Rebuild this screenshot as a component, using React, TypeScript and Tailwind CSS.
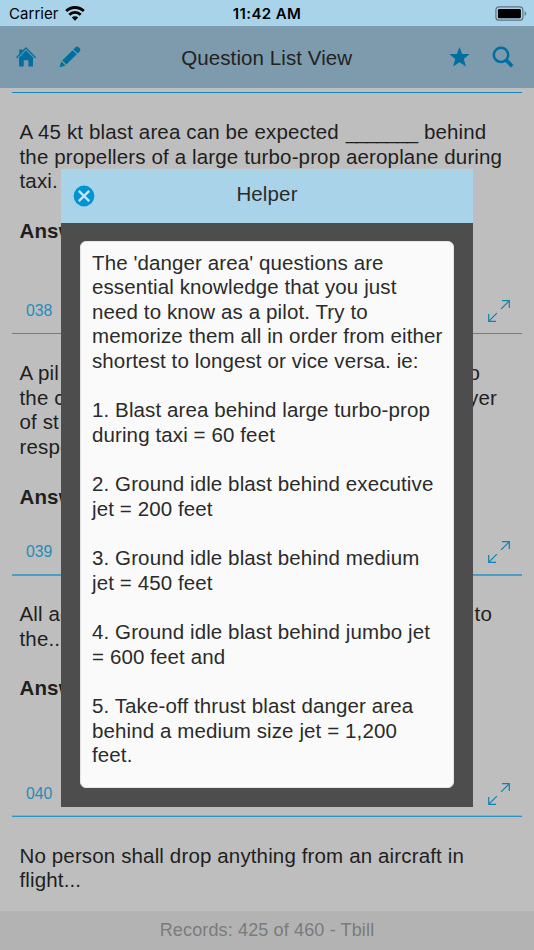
import { Fragment, type ReactNode } from 'react';
import clsx from 'clsx';

type Question = {
  id: string;
  lines: ReactNode[];
  // Ends of the lines that show to the right of the dialog
  lineEnds?: ReactNode[];
  divider: string;
};

const questions: Question[] = [
  {
    id: '038',
    lines: [
      <>
        A 45 kt blast area can be expected <span className="mx-px tracking-[-1.2px]">_______</span> behind
      </>,
      'the propellers of a large turbo-prop aeroplane during',
      'taxi.',
    ],
    divider: 'h-[241px] border-b border-[#2a94c3]',
  },
  {
    id: '039',
    lines: ['A pil', 'the c', 'of st', 'respo'],
    lineEnds: [<span className="pr-[17px]">to</span>, 'layer'],
    divider: 'h-[242px] border-b-2 border-[#4a9dc3]',
  },
  {
    id: '040',
    lines: ['All ac', 'the...'],
    lineEnds: [<span className="pr-[5px]">to</span>],
    divider: '-mt-px h-[242px] border-b border-[#2a94c3] shadow-[0_-1px_0_#8ab1c0_inset]',
  },
];

const helperText = [
  ["The 'danger area' questions are", 'essential knowledge that you just', 'need to know as a pilot. Try to', 'memorize them all in order from either', 'shortest to longest or vice versa. ie:'],
  ['1. Blast area behind large turbo-prop', 'during taxi = 60 feet'],
  ['2. Ground idle blast behind executive', 'jet = 200 feet'],
  ['3. Ground idle blast behind medium', 'jet = 450 feet'],
  ['4. Ground idle blast behind jumbo jet', '= 600 feet and'],
  ['5. Take-off thrust blast danger area', 'behind a medium size jet = 1,200', 'feet.'],
];

function StatusBar() {
  return (
    <div className="grid h-[26px] grid-cols-3 items-center bg-[#a9d3e9] font-['Inter',sans-serif] text-[15px] text-black">
      <div className="flex items-center pl-[9px]">
        <span className="pt-[2px] tracking-[0.05px]">Carrier</span>
        <svg className="ml-1.5 h-[15px] w-5" viewBox="0 0 20 15" fill="none" stroke="currentColor" strokeWidth="2.8">
          <path d="M1.2 5.1a12.6 12.6 0 0 1 17.6 0" />
          <path d="M4.3 8.8a8.1 8.1 0 0 1 11.4 0" />
          <path d="M10 14.8 6.8 11.5a4.6 4.6 0 0 1 6.4 0Z" fill="currentColor" stroke="none" />
        </svg>
      </div>
      <span className="pt-[2px] text-center font-semibold tracking-[0.4px]">11:42 AM</span>
      <svg className="mr-[6px] h-[15px] w-[33px] justify-self-end" viewBox="0 0 33 15">
        <rect x=".9" y=".8" width="27" height="13.4" rx="3.3" fill="none" stroke="#5d7682" strokeWidth="1.2" />
        <rect x="2.9" y="2.9" width="23" height="9.4" rx="1.3" />
        <path d="M29.7 5.3c2 1 2 3.6 0 4.6Z" fill="#5d7682" />
      </svg>
    </div>
  );
}

function Header() {
  return (
    <div className="flex h-[62px] items-center bg-[#7d9bad] pr-5 pl-4 text-[#006f9f]">
      <svg className="h-[22px] w-[21px]" viewBox="0 0 21 22" fill="currentColor">
        <path d="M3.3 3.4h3.4v2.4L3.3 9.1Z" />
        <path d="M.5 11.8 10 2l9.6 9.8" fill="none" stroke="currentColor" strokeWidth="1.3" />
        <path d="M10 4.2 2.1 12.4h1v8.1h4.6v-6.2h4.7v6.2H17v-8.1h1Z" />
      </svg>
      <svg className="ml-[22px] h-[22px] w-[22px]" viewBox="0 0 22 22" fill="currentColor">
        <path d="m14.4 3.4 2-2.1c1.1-1.1 2.5-.8 3.3 0l1 1c.9.9.9 2.3 0 3.2l-2.1 2Z" />
        <path d="m13.6 4.2 4.2 4.1L7.4 18.6l-4.2-4.1Z" />
        <path d="m2.3 15.4 4.2 4.1L.5 21.3Z" />
      </svg>
      <h1 className="flex-1 pt-0.5 pl-1 text-center text-[20.5px] tracking-[0.09px] text-[#222]">Question List View</h1>
      <svg className="h-5 w-[21px]" viewBox="0 0 21 20" fill="currentColor">
        <path d="m10.5 0 2.6 7.1h7.6L14.8 12l2.1 7.5-6.4-4.3-6.4 4.3L6.2 12 .3 7.1h7.6Z" />
      </svg>
      <svg className="ml-[22.5px] h-[22px] w-[22px]" viewBox="0 0 22 22" fill="none" stroke="currentColor">
        <circle cx="9" cy="8.9" r="7.2" strokeWidth="2.5" />
        <path d="m14 13.9 6.2 6.3" strokeWidth="3.6" />
      </svg>
    </div>
  );
}

function ExpandIcon() {
  return (
    <svg className="h-[22px] w-[22px]" viewBox="0 0 22 22" fill="none" stroke="#0f82ad" strokeWidth="1.2">
      <path d="M14 .7h7.3V8M21.2.8l-8.1 8.1" />
      <path d="M.7 14v7.3H8M.8 21.2l8.1-8.1" />
    </svg>
  );
}

function QuestionItem({ question }: { question: Question }) {
  return (
    <li className={clsx('mx-3 flex flex-col pt-[27px]', question.divider)}>
      <div className="flex justify-between pl-[7.5px]">
        <div className="whitespace-nowrap">
          {question.lines.map((line, i) => (
            <p key={i}>{line}</p>
          ))}
        </div>
        <div className="pr-[25px] text-right">
          {question.lineEnds?.map((line, i) => (
            <p key={i}>{line}</p>
          ))}
        </div>
      </div>
      <p className="mt-[25px] pl-[7.5px] font-bold">Answer:</p>
      <div className="mt-auto flex items-end justify-between pr-3 pb-[11px] pl-[14px] text-[15.8px] leading-[22px] tracking-normal text-[#268cb8]">
        <span>{question.id}</span>
        <ExpandIcon />
      </div>
    </li>
  );
}

function HelperDialog() {
  return (
    <div className="absolute top-[168.5px] left-[61px] w-[412px] bg-[#4d4d4d] pb-[19px]">
      <div className="relative flex h-[54px] items-center justify-center bg-[#a9d3e9] pb-0.5 text-[20.5px] text-[#2b2b2b]">
        <svg className="absolute top-4 left-3 h-[22px] w-[22px]" viewBox="0 0 22 22">
          <circle cx="11" cy="11" r="10.4" fill="#0094d4" />
          <path d="m5.8 5.8 10.4 10.4m0-10.4L5.8 16.2" stroke="#c6e4f4" strokeWidth="2.4" />
        </svg>
        Helper
      </div>
      <div className="mx-[19px] mt-[18px] h-[547px] rounded-[6px] border border-[#e5e5e5] bg-[#fafafa] pt-[9px] pl-[11px] tracking-[0.11px] whitespace-nowrap text-[#2b2b2b]">
        {helperText.map((block, i) => (
          <Fragment key={i}>
            {i > 0 && <br />}
            {block.map((line) => (
              <p key={line}>{line}</p>
            ))}
          </Fragment>
        ))}
      </div>
    </div>
  );
}

export default function App() {
  return (
    <div className="relative flex h-[950px] w-[534px] flex-col overflow-hidden bg-[#bebebe] font-['Liberation_Sans',Arial,sans-serif] text-[20.5px] leading-[24.64px] tracking-[0.14px] text-[#1f1f1f]">
      <StatusBar />
      <Header />
      <ul className="min-h-0 flex-1 overflow-hidden pt-1">
        <li className="mx-3 h-px bg-[#1789bb]" />
        {questions.map((question) => (
          <QuestionItem key={question.id} question={question} />
        ))}
        <li className="pt-[26.5px] pl-[19.5px]">
          No person shall drop anything from an aircraft in
          <br />
          flight...
        </li>
      </ul>
      <footer className="flex h-[39px] items-center justify-center bg-[#b3b3b3] text-[18px] text-[#7b7b7b]">
        Records: 425 of 460 - Tbill
      </footer>
      <HelperDialog />
    </div>
  );
}
